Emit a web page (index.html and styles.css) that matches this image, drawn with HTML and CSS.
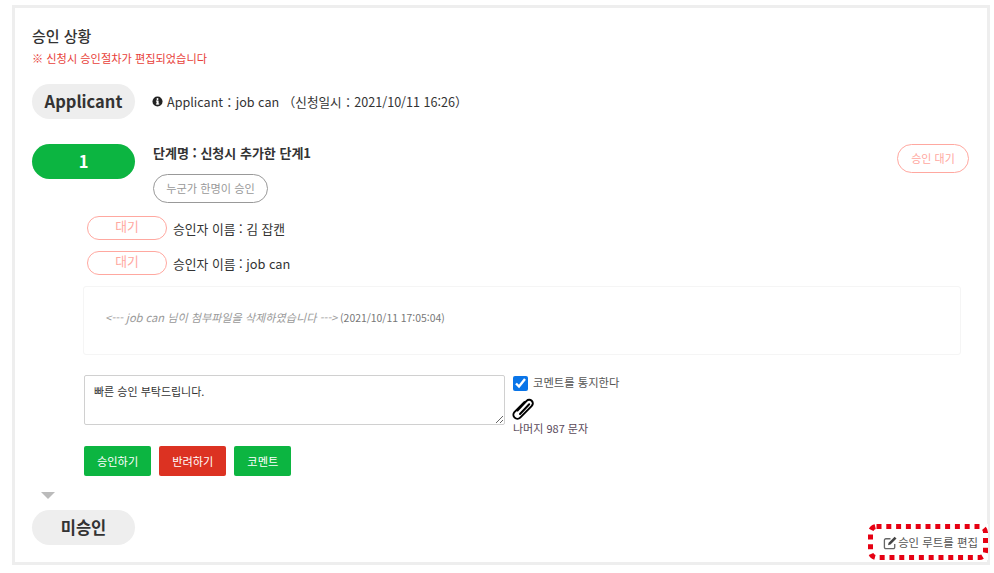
FILE: index.html
```html
<!DOCTYPE html>
<html lang="ko">
  <head>
    <meta charset="UTF-8" />
    <title>승인 상황</title>
    <link rel="stylesheet" href="styles.css">
  </head>
  <body>
    <div class="frame">
      <h3 class="title">승인 상황</h3>
      <p class="note">※ 신청시 승인절차가 편집되었습니다</p>

      <div class="applicant-row">
        <div class="pill pill-gray">Applicant</div>
        <div class="applicant-info">
          <svg class="info-icon" viewBox="0 0 12 12"><circle cx="6" cy="6" r="5.5" fill="#222"/><rect x="5" y="5" width="2.2" height="4.2" fill="#fff"/><rect x="4.3" y="8.2" width="3.6" height="1" fill="#fff"/><rect x="4.3" y="5" width="2" height="1" fill="#fff"/><circle cx="6" cy="3.4" r="1.1" fill="#fff"/></svg>
          <span>Applicant：job can （신청일시：2021/10/11 16:26）</span>
        </div>
      </div>

      <div class="step-row">
        <div class="pill pill-green">1</div>
        <div class="step-info">
          <div class="step-name">단계명 : 신청시 추가한 단계1</div>
          <div class="step-rule">누군가 한명이 승인</div>
        </div>
        <div class="step-status">승인 대기</div>
      </div>

      <div class="approver">
        <span class="wait-tag">대기</span>
        <span>승인자 이름 : 김 잡캔</span>
      </div>
      <div class="approver">
        <span class="wait-tag">대기</span>
        <span>승인자 이름 : job can</span>
      </div>

      <div class="log-box">
        <em>&lt;--- job can 님이 첨부파일을 삭제하였습니다 ---&gt;</em> (2021/10/11 17:05:04)
      </div>

      <div class="comment-row">
        <textarea class="comment-input">빠른 승인 부탁드립니다.</textarea>
        <div class="comment-side">
          <label class="notify">
            <input type="checkbox" checked>
            <span>코멘트를 통지한다</span>
          </label>
          <svg class="clip-icon" viewBox="0 0 24 24" fill="none" stroke="#000" stroke-width="2" stroke-linecap="round" stroke-linejoin="round"><path d="M6.500 13.500 15.600 3.900a3.600 3.600 0 0 1 5.200 5L9.200 20.600a4 4 0 0 1-5.800-5.500L13.600 5"/><path d="M9 17 18.200 7.300"/></svg>
          <div class="remain">나머지 987 문자</div>
        </div>
      </div>

      <div class="actions">
        <button class="btn btn-green">승인하기</button>
        <button class="btn btn-red">반려하기</button>
        <button class="btn btn-green">코멘트</button>
      </div>

      <div class="arrow-down"></div>
      <div class="pill pill-gray">미승인</div>

      <a class="edit-route">
        <svg class="edit-border" viewBox="0 0 120 36" fill="none"><rect x="2.500" y="2.500" width="115" height="31" rx="6" stroke="#e60012" stroke-width="5" stroke-dasharray="5 4.800"/></svg>
        <svg class="edit-icon" viewBox="0 0 16 16" fill="none"><path d="M12.500 9.500V13a1.500 1.500 0 0 1-1.500 1.500H3A1.500 1.500 0 0 1 1.500 13V5.500A1.500 1.500 0 0 1 3 4h5" stroke="#666" stroke-width="1.400"/><path d="M6 8.200 12.400 1.800l2 2L8 10.200l-2.600.6z" fill="#444"/></svg><span>승인 루트를 편집</span>
      </a>
    </div>
  </body>
</html>
```

FILE: styles.css
```css
* {
  box-sizing: border-box;
}

body {
  margin: 0;
  background: #ffffff;
  color: #333333;
  font-family: "Noto Sans CJK KR", "Noto Sans", sans-serif;
  font-size: 12.800px;
}

.frame {
  position: relative;
  margin: 5px 4px 0 12px;
  height: 560px;
  padding: 17px 18px 0 17px;
  border: 3px solid #eeeeee;
}

.title {
  margin: 0;
  height: 22px;
  line-height: 22px;
  font-size: 15px;
  font-weight: 500;
}

.note {
  margin: 2px 0 0;
  height: 18px;
  line-height: 18px;
  font-size: 11.200px;
  color: #e8413a;
}

.pill {
  flex: none;
  width: 103px;
  height: 35px;
  line-height: 35px;
  border-radius: 18px;
  text-align: center;
  font-size: 16.500px;
  font-weight: 700;
}

.pill-gray {
  background: #eeeeee;
}

.pill-green {
  background: #0cb541;
  color: #ffffff;
}

.applicant-row {
  display: flex;
  align-items: center;
  margin-top: 17px;
}

.applicant-info {
  display: flex;
  align-items: center;
  margin-left: 17px;
  font-size: 12.600px;
}

.info-icon {
  width: 11px;
  height: 11px;
  margin-right: 4px;
}

.step-row {
  display: flex;
  margin-top: 25px;
}

.step-info {
  flex: 1;
  margin-left: 18px;
}

.step-name {
  height: 18px;
  line-height: 18px;
  font-size: 13px;
  font-weight: 700;
}

.step-rule {
  width: 115px;
  height: 29px;
  line-height: 27px;
  margin-top: 12px;
  border: 1px solid #999999;
  border-radius: 15px;
  text-align: center;
  font-size: 11.200px;
  color: #999999;
}

.step-status {
  width: 72px;
  height: 29px;
  line-height: 27px;
  border: 1px solid #ffa8a0;
  border-radius: 15px;
  text-align: center;
  font-size: 11px;
  color: #ffa8a0;
}

.approver {
  display: flex;
  align-items: center;
  height: 24px;
  margin: 11px 0 0 55px;
}

.step-row + .approver {
  margin-top: 13px;
}

.wait-tag {
  width: 80px;
  height: 24px;
  line-height: 18px;
  margin-right: 6px;
  border: 1px solid #ffa8a0;
  border-radius: 12px;
  text-align: center;
  color: #ffa8a0;
}

.log-box {
  width: 878px;
  height: 69px;
  line-height: 60px;
  margin: 11px 0 0 51px;
  padding-left: 21px;
  border: 1px solid #f5f5f5;
  border-radius: 3px;
  font-size: 10.400px;
  color: #777777;
}

.log-box em {
  font-size: 11.100px;
  color: #999999;
}

.comment-row {
  display: flex;
  margin: 20px 0 0 52px;
}

.comment-input {
  display: block;
  width: 421px;
  height: 50px;
  padding: 7px 9px;
  border: 1px solid #d0d0d0;
  border-radius: 2px;
  font-family: inherit;
  font-size: 11px;
  color: #333333;
}

.comment-side {
  margin-left: 8px;
}

.notify {
  display: flex;
  align-items: center;
  height: 16px;
  font-size: 11.300px;
  color: #555555;
}

.notify span {
  margin-top: -2px;
}

.notify input {
  width: 15px;
  height: 15px;
  margin: 0 5px 0 0;
  accent-color: #0a75e8;
}

.clip-icon {
  display: block;
  width: 24px;
  height: 24px;
  margin: 6px 0 0 -2px;
}

.remain {
  height: 18px;
  line-height: 18px;
  margin-top: -2px;
  font-size: 11px;
  color: #5a4a5a;
}

.actions {
  display: flex;
  gap: 8px;
  margin: 9px 0 0 52px;
}

.btn {
  height: 30px;
  padding: 0 13px;
  border: none;
  border-radius: 2px;
  font-family: inherit;
  font-size: 11.200px;
  color: #ffffff;
}

.btn-green {
  background: #0cb541;
}

.btn-red {
  background: #dc3222;
}

.arrow-down {
  width: 0;
  margin: 16px 0 11px 9px;
  border-top: 7px solid #bbbbbb;
  border-left: 7px solid transparent;
  border-right: 7px solid transparent;
}

.edit-route {
  position: absolute;
  right: -1px;
  bottom: 2px;
  display: flex;
  align-items: center;
  justify-content: center;
  width: 120px;
  height: 36px;
  padding-left: 5px;
  background: #ffffff;
  font-size: 11.400px;
  color: #555555;
}

.edit-border {
  position: absolute;
  top: 0;
  left: 0;
  width: 120px;
  height: 36px;
}

.edit-icon {
  width: 15px;
  height: 15px;
}
```
